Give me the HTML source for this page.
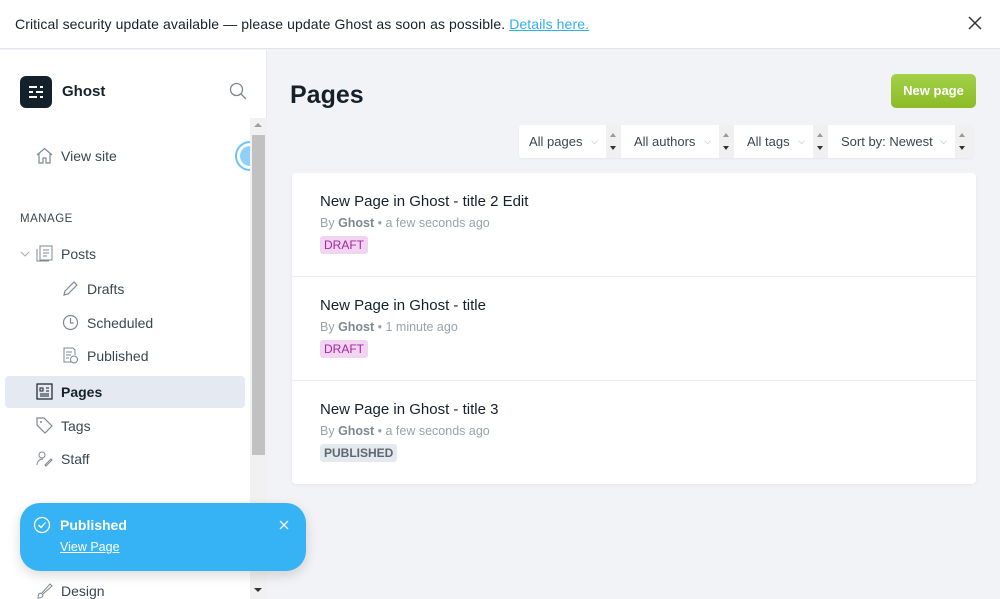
<!DOCTYPE html>
<html><head><meta charset="utf-8"><style>
*{box-sizing:border-box;margin:0;padding:0}
body{width:1000px;height:599px;overflow:hidden;font-family:"Liberation Sans",sans-serif;background:#f2f3f7;position:relative;color:#15212a}
.banner{position:absolute;left:0;top:0;width:1000px;height:49px;background:#fff;border-bottom:1px solid #e2e6ea;font-size:14px;line-height:48px;padding-left:15px;color:#15212a;letter-spacing:.1px}
.banner a{color:#30b0e8;text-decoration:underline}
.banner .x{position:absolute;right:18px;top:16px}
.side{position:absolute;left:0;top:50px;width:267px;height:549px;background:#fff;border-right:1px solid #e5e8ec}
.logo{position:absolute;left:20px;top:26px;width:32px;height:32px;background:#15212a;border-radius:6px}
.brand{position:absolute;left:62px;top:33px;font-weight:bold;font-size:15px}
.item{position:absolute;font-size:14px;color:#3a4650;display:flex;align-items:center}
.item svg{margin-right:8px}
.sb{position:absolute;left:250px;top:118px;width:17px;height:481px;background:#f1f1f1}
.thumb{position:absolute;left:252px;top:135px;width:13px;height:320px;background:#c1c1c1}
h1{position:absolute;left:290px;top:81px;font-size:25px;font-weight:bold;color:#15212a}
.btn{position:absolute;left:891px;top:74px;width:85px;height:34px;background:linear-gradient(#a3d149,#8cbb27);border-radius:5px;color:#fff;font-weight:bold;font-size:13px;text-align:center;line-height:34px}
.filters{position:absolute;left:519px;top:125px;height:33px;width:454px;background:#fff;border-radius:3px;box-shadow:0 1px 2px rgba(0,0,0,.05)}
.f{position:absolute;top:0;font-size:13px;color:#3a4650;line-height:33px;padding-left:10px;height:33px}
.f i{font-style:normal;color:#aaa;font-size:9px;position:absolute;right:8px;top:0}
.spin{position:absolute;top:0;width:15px;height:33px;background:#f0f0f0}
.spin:before{content:"";position:absolute;left:4px;top:8px;border:3.5px solid transparent;border-bottom:4px solid #999;border-top:0}
.spin:after{content:"";position:absolute;left:4px;top:21px;border:3.5px solid transparent;border-top:4px solid #333;border-bottom:0}
.card{position:absolute;left:292px;top:173px;width:684px;height:311px;background:#fff;border-radius:4px;box-shadow:0 1px 3px rgba(0,0,0,.06)}
.row{height:104px;border-bottom:1px solid #e8ecf0;padding:20px 28px}
.row:last-child{border:none}
.t{font-size:15px;color:#15212a;margin-bottom:6px}
.m{font-size:12.5px;color:#9aa3ab}
.m b{color:#7d8891}
.tag{display:inline-block;margin-top:6px;font-size:12px;padding:2px 4px;border-radius:3px;line-height:14px}
.d{background:#f0d4f0;color:#a626a4}
.p{background:#e3e9ef;color:#5c6770;font-weight:bold}
.toast{position:absolute;left:20px;top:503px;width:286px;height:68px;background:#36b3f5;border-radius:20px;color:#fff;box-shadow:0 4px 12px rgba(0,0,0,.15)}
</style></head><body>
<div class="banner">Critical security update available — please update Ghost as soon as possible. <a>Details here.</a>
<svg class="x" width="14" height="14" viewBox="0 0 14 14"><path d="M1 1L13 13M13 1L1 13" stroke="#333" stroke-width="1.5"/></svg></div>
<div class="side">
<div class="logo"><svg width="32" height="32"><path d="M9 11h8M20 11h3M9 16h4M16 16h7M9 21h8M20 21h3" stroke="#fff" stroke-width="2"/></svg></div>
<div class="brand">Ghost</div>
<svg style="position:absolute;left:229px;top:32px" width="18" height="18"><circle cx="7.5" cy="7.5" r="6" fill="none" stroke="#7d8891" stroke-width="1.3"/><path d="M12 12l5 5" stroke="#7d8891" stroke-width="1.3"/></svg>
<div class="item" style="left:36px;top:97px"><svg width="17" height="17"><path d="M1 8L8.5 1.5 16 8M3 7v9h4v-5h3v5h4V7" fill="none" stroke="#7d8891" stroke-width="1.2"/></svg>View site</div>
<div style="position:absolute;left:235px;top:91px;width:30px;height:30px;border-radius:50%;border:2px solid #6dc3f5;background:#fff"><div style="margin:3px;width:20px;height:20px;border-radius:50%;background:#8fd0fa"></div></div>
<div style="position:absolute;left:20px;top:163px;font-size:11.5px;color:#3a4650;letter-spacing:.5px">MANAGE</div>
<div class="item" style="left:20px;top:195px"><svg width="10" height="10" style="margin-right:6px"><path d="M1 3l4 4 4-4" fill="none" stroke="#aaa"/></svg><svg width="17" height="17"><path d="M4 1h12v14H4z" fill="none" stroke="#7d8891"/><path d="M1 4v12h12M7 5h6M7 8h6M7 11h4" fill="none" stroke="#7d8891"/></svg>Posts</div>
<div class="item" style="left:62px;top:230px"><svg width="17" height="17"><path d="M2 15l1-4 9-9 3 3-9 9z" fill="none" stroke="#7d8891" stroke-width="1.2"/></svg>Drafts</div>
<div class="item" style="left:62px;top:264px"><svg width="17" height="17"><circle cx="8.5" cy="8.5" r="7" fill="none" stroke="#7d8891" stroke-width="1.2"/><path d="M8.5 4v5h3" fill="none" stroke="#7d8891" stroke-width="1.2"/></svg>Scheduled</div>
<div class="item" style="left:62px;top:297px"><svg width="17" height="17"><path d="M9 15H2V1h9l2 2v5M4 5h6M4 8h5M4 11h3" fill="none" stroke="#7d8891"/><circle cx="12" cy="12.5" r="3.5" fill="none" stroke="#7d8891"/></svg>Published</div>
<div style="position:absolute;left:5px;top:326px;width:240px;height:32px;background:#e5eaf2;border-radius:4px"></div>
<div class="item" style="left:36px;top:333px;font-weight:bold;color:#15212a"><svg width="17" height="17"><rect x="1" y="1" width="15" height="15" fill="none" stroke="#15212a" stroke-width="1.2"/><path d="M4 5h3v3H4zM10 5h3M10 8h3M4 11h9M4 13h9" fill="none" stroke="#15212a"/></svg>Pages</div>
<div class="item" style="left:36px;top:367px"><svg width="17" height="17"><path d="M1 1h7l8 8-7 7-8-8z" fill="none" stroke="#7d8891" stroke-width="1.2"/><circle cx="5" cy="5" r="1" fill="#7d8891"/></svg>Tags</div>
<div class="item" style="left:36px;top:400px"><svg width="17" height="17"><circle cx="6" cy="5" r="3" fill="none" stroke="#7d8891"/><path d="M1 15c0-4 3-6 6-6M9 15l6-6 1 1-6 6z" fill="none" stroke="#7d8891"/></svg>Staff</div>
<div class="item" style="left:36px;top:532px"><svg width="17" height="17"><path d="M2 16c0-3 1-5 3-5l2 2c0 2-2 3-5 3zM6 11l8-9 2 2-9 8" fill="none" stroke="#7d8891"/></svg>Design</div>
</div>
<div class="sb"></div><div class="thumb"></div>
<div style="position:absolute;left:254px;top:123px;border:4px solid transparent;border-bottom:4px solid #a0a0a0;border-top:0"></div>
<div style="position:absolute;left:254px;top:588px;border:4px solid transparent;border-top:4px solid #333;border-bottom:0"></div>
<h1>Pages</h1>
<div class="btn">New page</div>
<div class="filters">
<div class="f" style="left:0;width:87px">All pages<i>⌵</i></div><span class="spin" style="left:87px"></span>
<div class="f" style="left:105px;width:95px">All authors<i>⌵</i></div><span class="spin" style="left:200px"></span>
<div class="f" style="left:218px;width:76px">All tags<i>⌵</i></div><span class="spin" style="left:294px"></span>
<div class="f" style="left:312px;width:124px">Sort by: Newest<i>⌵</i></div><span class="spin" style="left:436px;width:18px"></span>
</div>
<div class="card">
<div class="row"><div class="t">New Page in Ghost - title 2 Edit</div><div class="m">By <b>Ghost</b> • a few seconds ago</div><span class="tag d">DRAFT</span></div>
<div class="row"><div class="t">New Page in Ghost - title</div><div class="m">By <b>Ghost</b> • 1 minute ago</div><span class="tag d">DRAFT</span></div>
<div class="row"><div class="t">New Page in Ghost - title 3</div><div class="m">By <b>Ghost</b> • a few seconds ago</div><span class="tag p">PUBLISHED</span></div>
</div>
<div class="toast">
<svg style="position:absolute;left:13px;top:13px" width="18" height="18"><circle cx="9" cy="9" r="7.5" fill="none" stroke="#fff" stroke-width="1.3"/><path d="M5.5 9l2.5 2.5 4.5-5" fill="none" stroke="#fff" stroke-width="1.3"/></svg>
<div style="position:absolute;left:40px;top:14px;font-weight:bold;font-size:14px">Published</div>
<div style="position:absolute;left:40px;top:37px;font-size:12.5px;text-decoration:underline">View Page</div>
<svg style="position:absolute;left:259px;top:17px" width="10" height="10"><path d="M1 1l8 8M9 1L1 9" stroke="#fff" stroke-width="1.3"/></svg>
</div>
</body></html>
